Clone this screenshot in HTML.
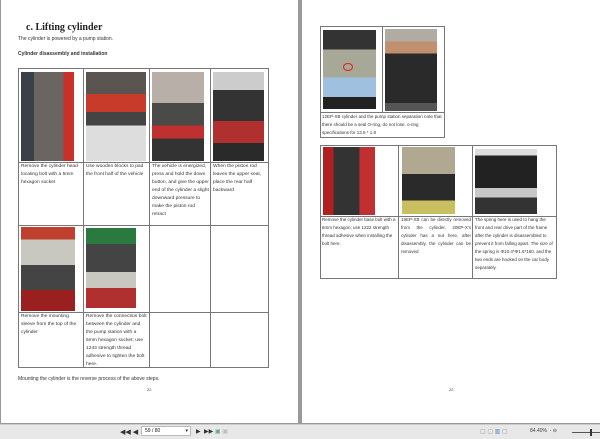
<!DOCTYPE html><html><head><style>
*{margin:0;padding:0;box-sizing:border-box}
body{width:600px;height:439px;background:#9a9a9a;position:relative;overflow:hidden;font-family:"Liberation Sans",sans-serif;color:#222}
.pg{position:absolute;background:#fff;top:0;height:423px}
.a{position:absolute}
.t{font-size:4.9px;line-height:8px;color:#333}
.ln{position:absolute;background:#777}
.im{position:absolute;overflow:hidden}
</style></head><body>
<div class="pg" style="left:1px;width:297px"></div>
<div class="pg" style="left:302px;width:298px"></div>

<div class="a" style="left:26px;top:22px;font:bold 10px 'Liberation Serif',serif;color:#222">c. Lifting cylinder</div>
<div class="a t" style="left:18px;top:35px;font-size:5px">The cylinder is powered by a pump station.</div>
<div class="a t" style="left:18px;top:50px;font-size:5px;font-weight:bold">Cylinder disassembly and installation</div>

<div class="ln" style="left:18px;top:68px;width:250px;height:1px"></div>
<div class="ln" style="left:18px;top:162px;width:250px;height:1px"></div>
<div class="ln" style="left:18px;top:225px;width:250px;height:1px"></div>
<div class="ln" style="left:18px;top:312px;width:250px;height:1px"></div>
<div class="ln" style="left:18px;top:367px;width:250px;height:1px"></div>
<div class="ln" style="left:18px;top:68px;width:1px;height:300px"></div>
<div class="ln" style="left:83px;top:68px;width:1px;height:300px"></div>
<div class="ln" style="left:149px;top:68px;width:1px;height:300px"></div>
<div class="ln" style="left:210px;top:68px;width:1px;height:300px"></div>
<div class="ln" style="left:268px;top:68px;width:1px;height:300px"></div>

<div class="im" style="left:21px;top:72px;width:53px;height:89px;background:linear-gradient(90deg,#3a4048 0 25%,#6a6560 25% 80%,#c8302a 80%)"></div>
<div class="im" style="left:86px;top:72px;width:60px;height:89px;background:linear-gradient(180deg,#5a5550 0 25%,#c83a2a 25% 45%,#444 45% 60%,#ddd 60%)"></div>
<div class="im" style="left:152px;top:72px;width:52px;height:89px;background:linear-gradient(180deg,#b8b0a8 0 35%,#4a4a48 35% 60%,#c03030 60% 75%,#333 75%)"></div>
<div class="im" style="left:213px;top:72px;width:51px;height:89px;background:linear-gradient(180deg,#ccc 0 20%,#333 20% 55%,#b03030 55% 80%,#2a2a2a 80%)"></div>
<div class="im" style="left:21px;top:227px;width:54px;height:84px;background:linear-gradient(180deg,#c04030 0 15%,#c8c8c0 15% 45%,#444 45% 75%,#9a2020 75%)"></div>
<div class="im" style="left:86px;top:228px;width:50px;height:80px;background:linear-gradient(180deg,#2a7a40 0 20%,#444 20% 55%,#c8c8c0 55% 75%,#b03030 75%)"></div>

<div class="a t" style="left:21px;top:163px;width:60px">Remove the cylinder head locating bolt with a 5mm hexagon socket</div>
<div class="a t" style="left:86px;top:163px;width:62px">Use wooden blocks to pad the front half of the vehicle</div>
<div class="a t" style="left:152px;top:163px;width:57px">The vehicle is energized, press and hold the down button, and give the upper end of the cylinder a slight downward pressure to make the piston rod retract</div>
<div class="a t" style="left:213px;top:163px;width:54px">When the piston rod leaves the upper seat, place the rear half backward</div>
<div class="a t" style="left:21px;top:313px;width:60px">Remove the mounting sleeve from the top of the cylinder</div>
<div class="a t" style="left:86px;top:313px;width:62px">Remove the connection bolt between the cylinder and the pump station with a 5mm hexagon socket; use 1243 strength thread adhesive to tighten the bolt here.</div>

<div class="a t" style="left:18px;top:375px;font-size:5px">Mounting the cylinder is the reverse process of the above steps.</div>
<div class="a t" style="left:147px;top:386px;font-size:4px">22</div>

<div class="ln" style="left:320px;top:26px;width:124px;height:1px"></div>
<div class="ln" style="left:320px;top:112px;width:124px;height:1px"></div>
<div class="ln" style="left:320px;top:137px;width:124px;height:1px"></div>
<div class="ln" style="left:320px;top:26px;width:1px;height:112px"></div>
<div class="ln" style="left:382px;top:26px;width:1px;height:86px"></div>
<div class="ln" style="left:444px;top:26px;width:1px;height:112px"></div>
<div class="im" style="left:323px;top:30px;width:53px;height:79px;background:linear-gradient(180deg,#333 0 25%,#a8a898 25% 60%,#a0c0e0 60% 85%,#222 85%)"><div class="a" style="left:20px;top:33px;width:10px;height:8px;border:1.5px solid #e02020;border-radius:50%"></div></div>
<div class="im" style="left:385px;top:29px;width:52px;height:82px;background:linear-gradient(180deg,#b0aca4 0 15%,#c09070 15% 30%,#2a2a2a 30% 90%,#555 90%)"></div>
<div class="a t" style="left:322px;top:113px;width:121px;font-size:4.5px">12EP-XB cylinder and the pump station separation note that there should be a seal O-ring, do not lose. o-ring specifications for 13.5 * 1.8</div>

<div class="ln" style="left:320px;top:145px;width:236px;height:1px"></div>
<div class="ln" style="left:320px;top:216px;width:236px;height:1px"></div>
<div class="ln" style="left:320px;top:278px;width:236px;height:1px"></div>
<div class="ln" style="left:320px;top:145px;width:1px;height:134px"></div>
<div class="ln" style="left:398px;top:145px;width:1px;height:134px"></div>
<div class="ln" style="left:472px;top:145px;width:1px;height:134px"></div>
<div class="ln" style="left:556px;top:145px;width:1px;height:134px"></div>
<div class="im" style="left:323px;top:147px;width:52px;height:68px;background:linear-gradient(90deg,#b02020 0 20%,#333 20% 70%,#c03030 70%)"></div>
<div class="im" style="left:402px;top:147px;width:53px;height:67px;background:linear-gradient(180deg,#b0a890 0 40%,#2a2a2a 40% 80%,#c8c060 80%)"></div>
<div class="im" style="left:475px;top:149px;width:62px;height:65px;background:linear-gradient(180deg,#ddd 0 10%,#222 10% 60%,#c8c8c8 60% 75%,#333 75%)"></div>
<div class="a t" style="left:322px;top:216px;width:75px;font-size:4.5px">Remove the cylinder base bolt with a 6mm hexagon; use 1222 strength thread adhesive when installing the bolt here.</div>
<div class="a t" style="left:401px;top:216px;width:70px;font-size:4.5px;text-align:justify">15EP-XB can be directly removed from the cylinder, 20EP-X's cylinder has a nut here, after disassembly, the cylinder can be removed</div>
<div class="a t" style="left:475px;top:216px;width:80px;font-size:4.5px">The spring here is used to hang the front and rear drive part of the frame after the cylinder is disassembled to prevent it from falling apart. The size of the spring is Φ10.4*Φ1.6*160, and the two ends are hooked on the car body separately.</div>
<div class="a t" style="left:449px;top:386px;font-size:4px">22</div>

<div class="a" style="left:0;top:424px;width:600px;height:15px;background:#e8e8e8;border-top:1px solid #ccc"></div>
<div class="a" style="left:120px;top:428px;font-size:7px;color:#333">◀◀ ◀</div>
<div class="a" style="left:141px;top:426px;width:50px;height:10px;background:#fff;border:1px solid #bbb;font-size:5px;line-height:8px;padding-left:3px">59 / 80 <span style="float:right;padding-right:2px">▾</span></div>
<div class="a" style="left:196px;top:428px;font-size:6px;color:#333">▶ &nbsp;▶▶ <span style="color:#6a8">▣</span> <span style="color:#bbb">▣</span></div>
<div class="a" style="left:480px;top:428px;font-size:6px;color:#999">▢ ▢ <span style="color:#58c">▥</span> ▢</div>
<div class="a" style="left:530px;top:428px;font-size:5px;color:#444">84.40% &nbsp;- ⊖</div>
<div class="a" style="left:572px;top:432px;width:28px;height:1px;background:#555"></div>
<div class="a" style="left:590px;top:429px;width:2px;height:7px;background:#333"></div>
</body></html>
